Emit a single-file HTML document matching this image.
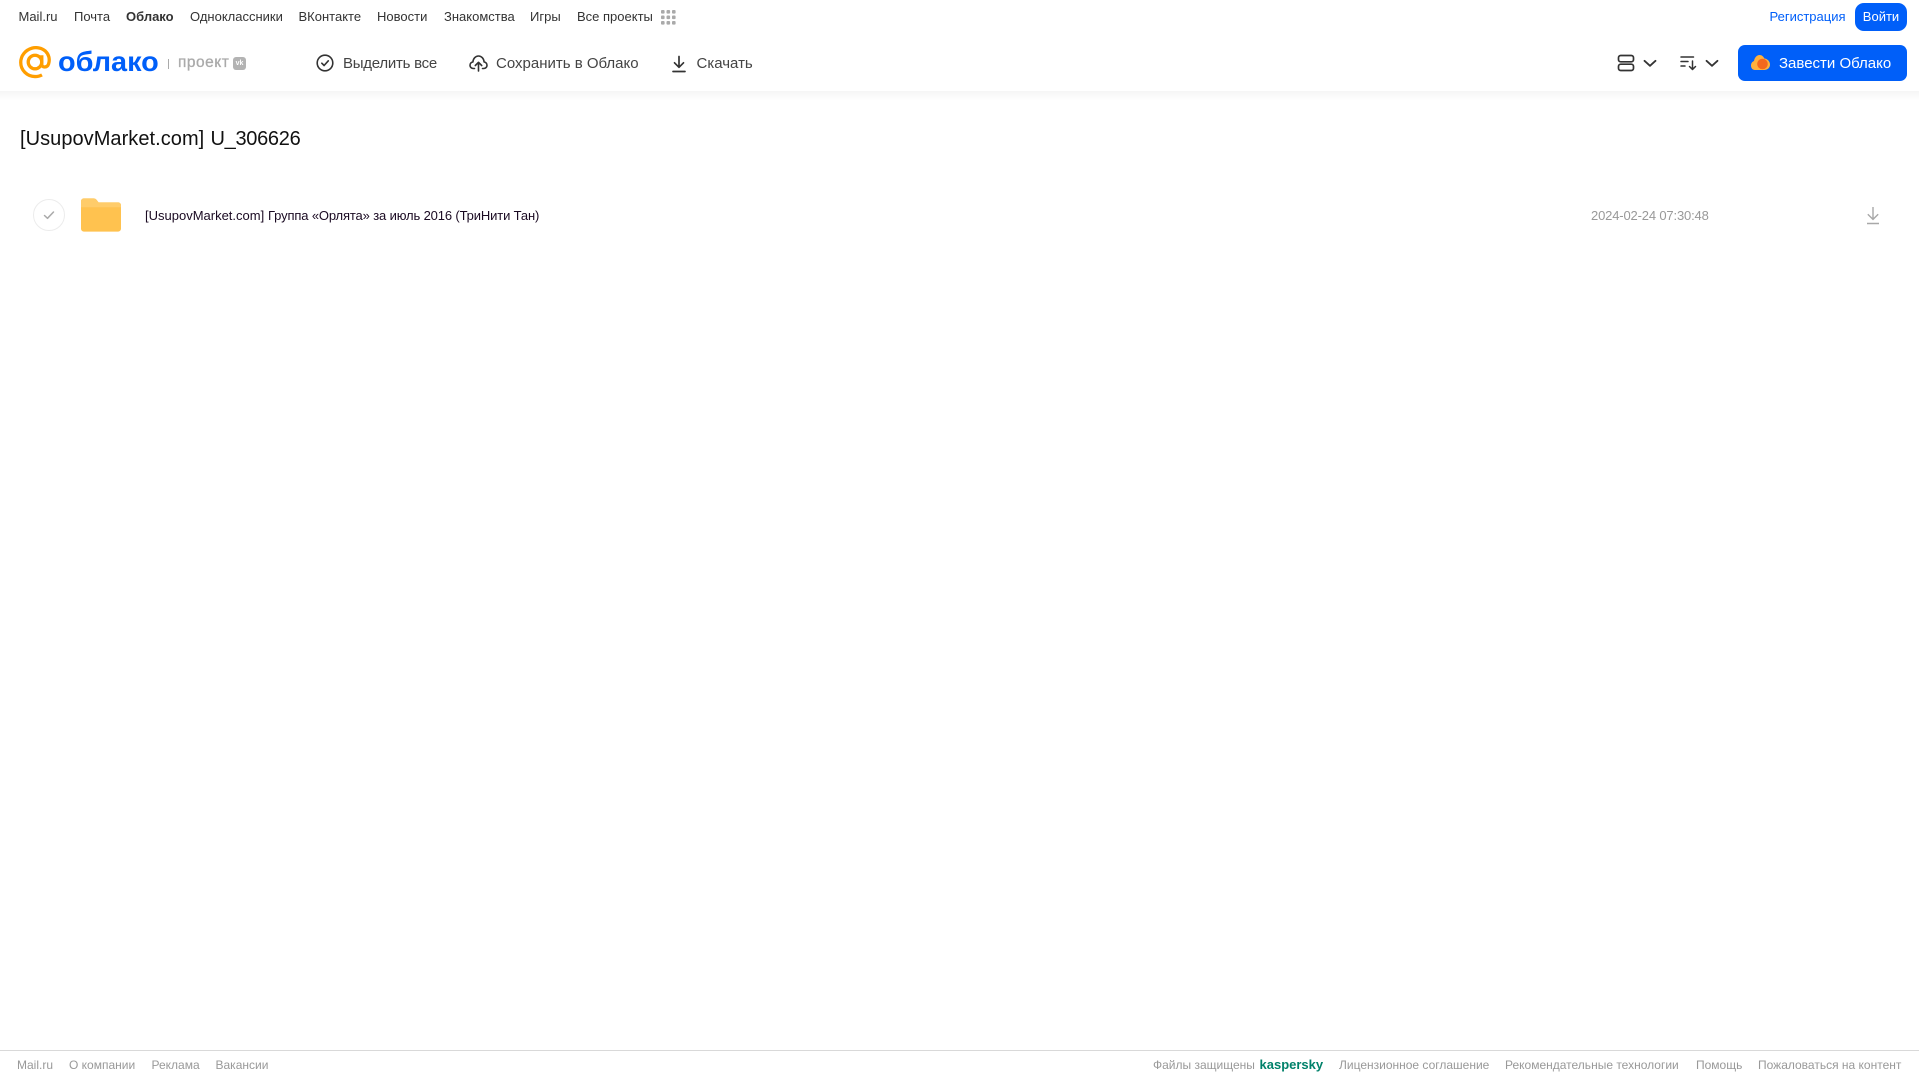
<!DOCTYPE html>
<html lang="ru"><head><meta charset="utf-8"><title>Облако</title>
<style>
html,body{margin:0;padding:0;width:1919px;height:1079px;overflow:hidden;background:#fff}
body{font-family:"Liberation Sans","Noto Sans CJK SC",sans-serif;position:relative}
.t{position:absolute;white-space:nowrap;line-height:20px;height:20px}
.n{top:7px;font-size:13px;color:#333}
.a{top:54px;font-size:15px;color:#444}
.f{top:1055px;font-size:12px;color:#999}
svg{position:absolute;display:block}
</style></head><body>
<div style="position:absolute;left:0;top:91px;width:1919px;height:10px;background:linear-gradient(#f5f5f5,#fff)"></div>

<span class="t n" style="left:18.500px">Mail.ru</span>
<span class="t n" style="left:74px">Почта</span>
<span class="t n" style="left:126px;font-weight:bold">Облако</span>
<span class="t n" style="left:190px">Одноклассники</span>
<span class="t n" style="left:298.500px">ВКонтакте</span>
<span class="t n" style="left:377px">Новости</span>
<span class="t n" style="left:444px">Знакомства</span>
<span class="t n" style="left:530px">Игры</span>
<span class="t n" style="left:577px">Все проекты</span>
<svg style="left:661px;top:10px" width="15" height="15" fill="#aaa"><rect x="0" y="0" width="3.6" height="3.6" rx="1"/><rect x="5.5" y="0" width="3.6" height="3.6" rx="1"/><rect x="11" y="0" width="3.6" height="3.6" rx="1"/><rect x="0" y="5.5" width="3.6" height="3.6" rx="1"/><rect x="5.5" y="5.5" width="3.6" height="3.6" rx="1"/><rect x="11" y="5.5" width="3.6" height="3.6" rx="1"/><rect x="0" y="11" width="3.6" height="3.6" rx="1"/><rect x="5.5" y="11" width="3.6" height="3.6" rx="1"/><rect x="11" y="11" width="3.6" height="3.6" rx="1"/></svg>

<span class="t n" style="left:1769.500px;color:#005ff9">Регистрация</span>
<div style="position:absolute;left:1855px;top:3px;width:52px;height:28px;background:#005ff9;border-radius:9px;color:#fff;font-size:13px;line-height:28px;text-align:center">Войти</div>

<svg style="left:18px;top:46px" width="34" height="33" viewBox="0 0 35 34" fill="none" stroke="#ff9e00" stroke-width="3.400"><circle cx="17.500" cy="16.500" r="7"/><path d="M24.500 9.500v9.500c0 3.600 5.600 3.600 7-.5 1.600-5 .2-10-3.200-13.200C24.500 1.900 19 1 14.500 2.200 7.500 4.200 2.800 10 2.800 17c0 8 6.700 14.500 14.700 14.500 2.800 0 5-.5 7.200-1.700"/></svg>
<span class="t" style="left:57.500px;top:46px;height:32px;line-height:32px;font-size:28px;font-weight:bold;color:#005ff9;transform-origin:0 50%;transform:scaleX(1.03)">облако</span>
<div style="position:absolute;left:168px;top:59px;width:1px;height:10px;background:#aaa"></div>
<span class="t" style="left:178px;top:53px;font-size:15.500px;color:#aaa;letter-spacing:.5px;-webkit-text-stroke:.3px #aaa">проект</span>
<div style="position:absolute;left:233px;top:57px;width:13px;height:13px;background:#b3b3b3;border-radius:3px;color:#fff;font-size:7px;font-weight:bold;line-height:13px;text-align:center">vk</div>

<svg style="left:316px;top:54px" width="18" height="18" viewBox="0 0 18 18" fill="none" stroke="#333" stroke-width="1.600"><circle cx="9" cy="9" r="7.800"/><path d="M5.800 9.200l2.300 2.300 4.200-4.700" stroke-linecap="round" stroke-linejoin="round"/></svg>
<span class="t a" style="left:343px;letter-spacing:-.25px">Выделить все</span>
<svg style="left:469px;top:54px" width="19" height="18" viewBox="0 0 19 18" fill="none" stroke="#333" stroke-width="1.600" stroke-linecap="round" stroke-linejoin="round"><path d="M5.500 14.500H4.300C2.400 14.500 1 13 1 11.200c0-1.700 1.200-3 2.900-3.300C4.200 4.600 6.500 2 9.500 2s5.300 2.600 5.600 5.900c1.700.3 2.900 1.600 2.900 3.300 0 1.800-1.400 3.300-3.300 3.300h-1.200"/><path d="M9.500 17V8.500M6.300 11.500l3.200-3.200 3.200 3.200"/></svg>
<span class="t a" style="left:496px">Сохранить в Облако</span>
<svg style="left:671px;top:55px" width="16" height="18" viewBox="0 0 16 18" fill="none" stroke="#333" stroke-width="1.700" stroke-linecap="round" stroke-linejoin="round"><path d="M8 1.500v10.500M3.500 7.800L8 12.300l4.500-4.500M2 16.500h12"/></svg>
<span class="t a" style="left:696.500px">Скачать</span>

<svg style="left:1617px;top:54px" width="18" height="18" viewBox="0 0 18 18" fill="none" stroke="#333" stroke-width="1.700"><rect x="1.500" y="1.500" width="15" height="6.300" rx="2.200"/><rect x="1.500" y="10.200" width="15" height="6.300" rx="2.200"/></svg>
<svg style="left:1643px;top:59px" width="14" height="9" viewBox="0 0 14 9" fill="none" stroke="#333" stroke-width="1.800" stroke-linecap="round" stroke-linejoin="round"><path d="M1.500 1.800L7 6.800l5.500-5"/></svg>
<svg style="left:1680px;top:55px" width="18" height="16" viewBox="0 0 18 16" fill="none" stroke="#333" stroke-width="1.500" stroke-linecap="round" stroke-linejoin="round"><path d="M1 2h12.500M1 6.500h7M1 11h4M12.500 6v8.500M9.500 11.500l3 3 3-3"/></svg>
<svg style="left:1705px;top:59px" width="14" height="9" viewBox="0 0 14 9" fill="none" stroke="#333" stroke-width="1.800" stroke-linecap="round" stroke-linejoin="round"><path d="M1.500 1.800L7 6.800l5.500-5"/></svg>

<div style="position:absolute;left:1738px;top:45px;width:169px;height:36px;background:#005ff9;border-radius:7px"></div>
<svg style="left:1750px;top:54px" width="21" height="17" viewBox="0 0 21 17"><path d="M1 11.500C1 9 2.500 7.500 4 7 4.500 3.500 6.800 1 9.500 1c2.200 0 4 1.400 4.800 3.500C17 4.700 20 7 20 10.500c0 3.500-2.700 5.500-6 5.500H5c-2.500 0-4-2-4-4.500z" fill="#ffb13d"/><circle cx="12.500" cy="10" r="5.300" fill="#f4681e"/></svg>
<span class="t" style="left:1779px;top:54px;font-size:15px;color:#fff">Завести Облако</span>

<span class="t" style="left:20px;top:126.500px;height:24px;line-height:24px;font-size:20px;color:#111;letter-spacing:.05px">[UsupovMarket.com]</span>
<span class="t" style="left:210.500px;top:126.500px;height:24px;line-height:24px;font-size:20px;color:#111;letter-spacing:-.3px">U_306626</span>

<div style="position:absolute;left:33px;top:199px;width:30px;height:30px;border:1px solid #ececec;border-radius:50%"></div>
<svg style="left:42px;top:209px" width="14" height="12" viewBox="0 0 14 12" fill="none" stroke="#aaa" stroke-width="1.500" stroke-linecap="round" stroke-linejoin="round"><path d="M2.500 6.500l3 2.800 6-6.300"/></svg>
<svg style="left:81px;top:198px" width="40" height="34" viewBox="0 0 41 34"><path d="M0 3C0 1.300 1.300 0 3 0h10c1.500 0 2.300.7 3.200 1.800L18 4h20c1.700 0 3 1.300 3 3v24c0 1.700-1.300 3-3 3H3c-1.700 0-3-1.300-3-3z" fill="#ffc24f"/><path d="M0 3C0 1.300 1.300 0 3 0h10c1.500 0 2.300.7 3.200 1.800L18 4h20c1.700 0 3 1.300 3 3v2H0z" fill="#ffcc6a"/></svg>
<span class="t" style="left:145px;top:206px;font-size:13px;color:#1a0a22">[UsupovMarket.com]</span>
<span class="t" style="left:268px;top:206px;font-size:13px;color:#1a0a22;letter-spacing:-.14px">Группа «Орлята» за июль 2016 (ТриНити Тан)</span>
<span class="t" style="left:1591px;top:206px;font-size:13px;color:#999;letter-spacing:-.16px">2024-02-24 07:30:48</span>
<svg style="left:1866px;top:206px" width="14" height="19" viewBox="0 0 14 19" fill="none" stroke="#a8a8a8" stroke-width="1.400"><path d="M7 1v12M1.800 8.200L7 13.400l5.200-5.200M1 17.500h12"/></svg>

<div style="position:absolute;left:0;top:1050px;width:1919px;height:1px;background:#d9d9d9"></div>
<span class="t f" style="left:17px">Mail.ru</span>
<span class="t f" style="left:69px">О компании</span>
<span class="t f" style="left:151.500px">Реклама</span>
<span class="t f" style="left:215.500px">Вакансии</span>
<span class="t f" style="left:1153px">Файлы защищены</span>
<span class="t f" style="left:1259.500px;font-size:13px;font-weight:bold;color:#00816a">kaspersky</span>
<span class="t f" style="left:1339px">Лицензионное соглашение</span>
<span class="t f" style="left:1505px">Рекомендательные технологии</span>
<span class="t f" style="left:1696px">Помощь</span>
<span class="t f" style="left:1758px">Пожаловаться на контент</span>
</body></html>
